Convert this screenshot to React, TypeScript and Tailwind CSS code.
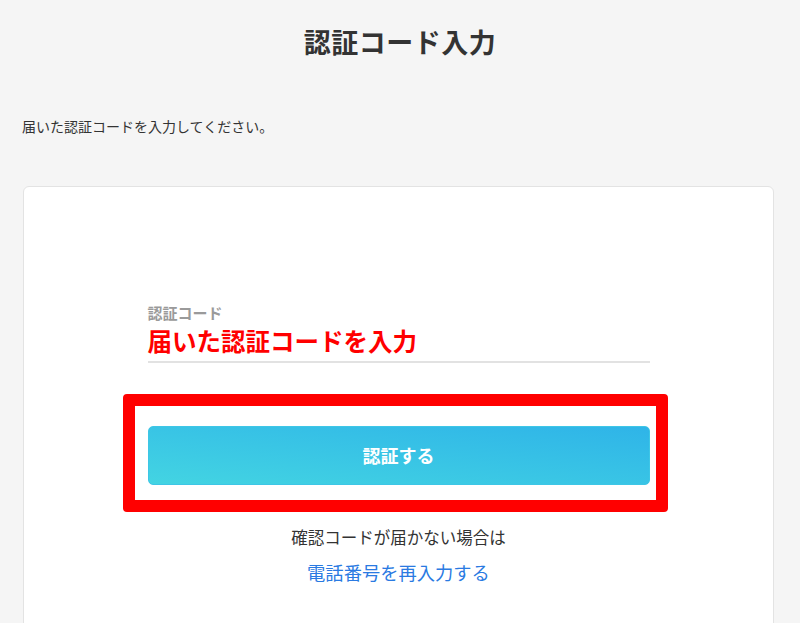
export default function App() {
  return (
    <div
      className="h-[623px] w-full overflow-hidden bg-[#f5f5f5] text-[#333]"
      style={{ fontFamily: '"Noto Sans CJK JP", "Noto Sans", sans-serif' }}
    >
      {/* Header */}
      <div className="flex h-[82px] items-center justify-center">
        <h1 className="text-[27px] font-bold leading-none tracking-[0.5px] text-[#333]">認証コード入力</h1>
      </div>

      <p className="mt-[34px] px-[22px] text-[14px] leading-[20px] text-[#333]">
        届いた認証コードを入力してください。
      </p>

      {/* Card */}
      <div className="ml-[23px] mr-[26px] mt-[50px] h-[600px] rounded-[6px] border border-[#e3e3e3] bg-white pt-[116px]">
        <div className="mx-auto w-[502px]">
          <label className="block text-[15px] font-bold leading-[20px] text-[#9a9a9a]">認証コード</label>
          <div className="mt-[3px] border-b-2 border-[#e2e2e2] pb-[5px]">
            <span className="block text-[24.5px] font-bold leading-[30px] text-[#ff0000]">
              届いた認証コードを入力
            </span>
          </div>

          <div className="relative mt-[63px]">
            <button className="flex h-[59px] w-full items-center justify-center rounded-[5px] border border-[#3ec6e6] bg-gradient-to-tr from-[#43d4e2] to-[#2fb4e8] text-[18px] font-bold text-white">
              認証する
            </button>
            {/* annotation box */}
            <div className="pointer-events-none absolute -bottom-[27px] -left-[25px] -right-[18px] -top-[32px] rounded-[4px] border-[12px] border-[#ff0000]" />
          </div>

          <p className="mt-[40px] text-center text-[16.5px] leading-[24px] text-[#333]">確認コードが届かない場合は</p>
          <a className="mt-[10px] block text-center text-[18.3px] leading-[26px] text-[#2a7ae2]">電話番号を再入力する</a>
        </div>
      </div>
    </div>
  );
}
